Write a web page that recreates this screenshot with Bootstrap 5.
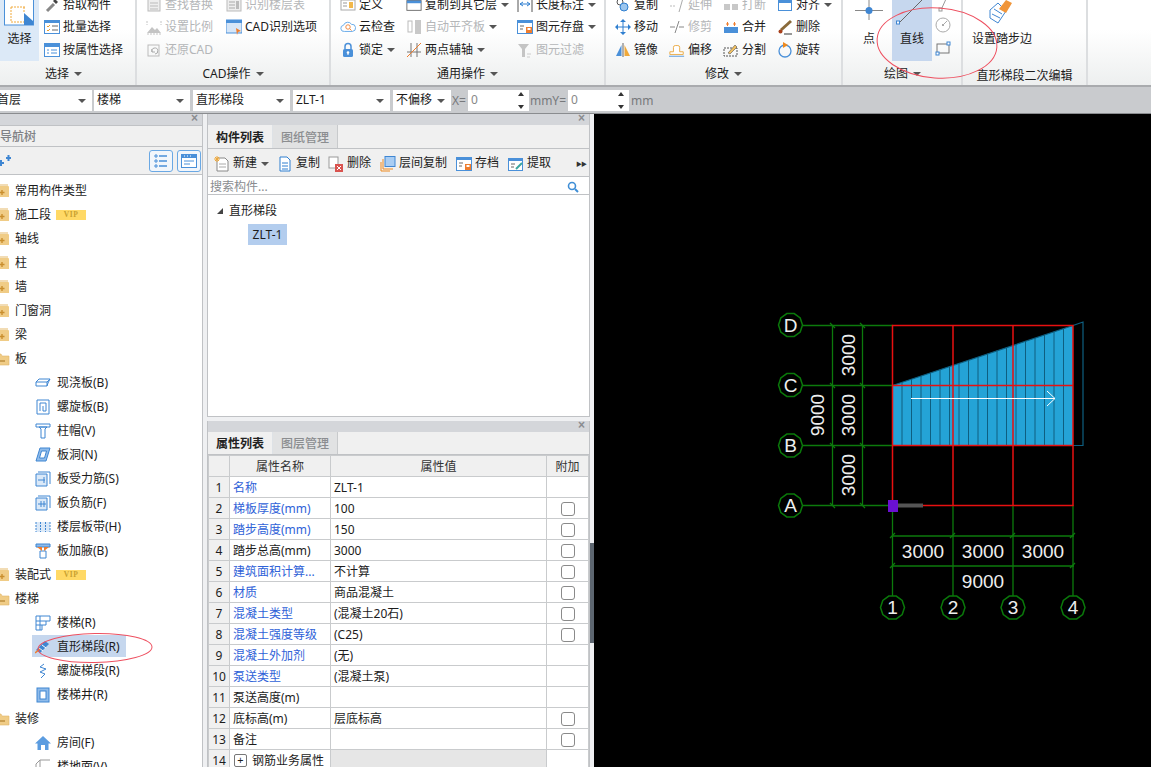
<!DOCTYPE html>
<html lang="zh-CN">
<head>
<meta charset="UTF-8">
<title>直形梯段</title>
<link rel="stylesheet" href="https://cdn.jsdelivr.net/npm/bootstrap@5.3.3/dist/css/bootstrap.min.css">
<style>
html,body{height:100%}
body{width:1151px;height:767px;overflow:hidden;position:relative;font:12px/1.2 "Noto Sans","Noto Sans CJK SC",sans-serif;color:#1c1c1c;background:#eff0f2}
.ico{width:16px;height:16px;flex:none;display:block}
/* ribbon */
.ribbon{height:87px;background:linear-gradient(#fff 35%,#edefef);border-bottom:2px solid #a9abae}
.rb-group{height:85px;flex:none;border-right:2px solid #dcdee0;display:flex;flex-direction:column}
.rb-body{height:64px;display:flex;overflow:hidden;flex:none}
.rb-col{margin-top:-6.5px;flex:none}
.rb-item{height:22.5px;display:flex;align-items:center;gap:3px;white-space:nowrap}
.rb-item .caret-dn{margin-left:1px}
.rb-off{color:#b4b6b8}
.rb-label{flex:1;text-align:center;padding-top:3px;white-space:nowrap}
.caret-dn{display:inline-block;border:4px solid transparent;border-top:4px solid #555;border-bottom:0;margin-left:5px;vertical-align:2px}
.rb-big{flex:none;height:61px;display:flex;flex-direction:column;align-items:center;justify-content:flex-end;padding-bottom:15px;position:relative;overflow:hidden}
.rb-big svg{position:absolute;left:0;top:0}
.rb-sel{background:#dce9f7}
.rb-active{background:#c6d7ee}
/* option bar */
.optbar{height:27px;background:#c9cbce;border-bottom:1px solid #8a8c8f;padding-top:3px;gap:2px;color:#77797c}
.opt-box{height:21px;background:#fff;color:#1c1c1c;display:flex;align-items:center;justify-content:space-between;padding:0 6px 0 3px;flex:none}
.opt-box i{border:4px solid transparent;border-top:4px solid #555;border-bottom:0}
.opt-num{color:#888;position:relative}
.opt-spin{position:absolute;right:5px;top:2px;bottom:2px;display:flex;flex-direction:column;justify-content:space-between}
.opt-spin i{display:block;border:3.5px solid transparent}
.opt-spin i:first-child{border-bottom:4px solid #333;border-top:0}
.opt-spin i:last-child{border-top:4px solid #333;border-bottom:0}
/* panes */
.workarea{height:653px}
.pane-strip{height:11px;background:#d4d6da;position:relative;flex:none}
.pane-strip b{position:absolute;right:4px;top:-3px;font:bold 12px/14px "Liberation Sans",sans-serif;color:#8a8c90}
.left-pane{width:203px;flex:none;background:#fff;border-right:1px solid #c0c2c5;overflow:hidden}
.lp-title{height:22px;flex:none;padding-top:3px;background:#f0f0f0;border-top:1px solid #c0c2c5;border-bottom:1px solid #c0c2c5;color:#7f8185;font-weight:500;display:flex;align-items:center}
.lp-tools{height:28px;flex:none;background:#f0f0f0;border-bottom:1px solid #c0c2c5;display:flex;align-items:center;gap:4px;padding-right:1px}
.lp-btn{width:24px;height:22px;border:1px solid #6aa8e4;border-radius:3px;background:#f2f6fb;display:flex;align-items:center;justify-content:center}
.nav-tree-list{padding-top:4px;flex:none}
.tree-row{height:24px;display:flex;align-items:center;white-space:nowrap}
.tree-row .fold{margin-left:-6px;margin-right:5px}
.tree-kid{padding-left:35px;position:relative}
.tree-kid span{margin-left:6px}
.tree-pick{background:#c6d7ee;position:absolute;left:32px;top:0;width:94px;height:22px;z-index:0}
.tree-kid svg,.tree-kid span{position:relative;z-index:1}
.tag-vip{width:30px;height:10px;background:#ffd966;color:#c8a030;font:bold 7.5px/10px "Liberation Serif",serif;text-align:center;margin-left:5px;letter-spacing:.5px}
.mid-col{width:383px;flex:none;margin:0 4px;gap:4px;min-height:0}
.mid-pane{background:#fff;border-left:1px solid #c0c2c5;border-right:1px solid #c0c2c5;overflow:hidden}
.mid-top{height:303px;flex:none;border-bottom:1px solid #c0c2c5}
.mid-bottom{flex:1;min-height:0}
.tabs-pane{background:#f0f0f0;border-bottom:1px solid #c0c2c5;flex:none;flex-wrap:nowrap}
.tabs-pane .nav-item{height:100%}
.tabs-pane .nav-link{width:65px;height:100%;padding:3px 0 0;border:0;border-radius:0;display:flex;align-items:center;justify-content:center;font-weight:500;margin:0;background:#e1e2e3;color:#8b8d90;border-right:1px solid #c8cacc}
.tabs-pane .nav-link.active{background:#f0f0f0;color:#222;font-weight:700}
.mid-tools{height:28px;background:#f0f0f0;border-bottom:1px solid #c0c2c5;display:flex;align-items:center;padding:2px 0 0 6px;flex:none;white-space:nowrap}
.mid-tools .tb-i{display:flex;align-items:center;gap:3px;margin-right:8px}
.mid-tools .tb-i:nth-child(n+3){margin-right:9px}
.mid-tools .tb-i .caret-dn{margin-left:1px}
.mid-more{margin-left:auto;margin-right:3px;font:6px "Liberation Sans",sans-serif;color:#333;letter-spacing:-1px}
.mid-search{height:18px;border-bottom:1px solid #c0c2c5;padding:3px 10px 0 2px;color:#8a8c8f;flex:none}
.comp-root{padding:3px 0 0 9px;height:29px;display:flex;align-items:center;gap:6px;flex:none}
.comp-tri{width:0;height:0;border:3px solid transparent;border-right-color:#444;border-bottom-color:#444}
.comp-pick{background:#b3cdee;margin-left:40px;width:39px;height:21px;padding-top:2px;display:flex;align-items:center;justify-content:center;flex:none}
/* property table */
.prop-tb{table-layout:fixed;width:380px;--bs-table-border-color:#c9cbcd;margin:0;color:#1c1c1c}
.prop-tb td,.prop-tb th{height:21px;padding:1px 3px 0;font-weight:400;vertical-align:middle;white-space:nowrap;overflow:hidden;line-height:19px}
.prop-tb th{background:#f0f0f0;text-align:center;color:#333}
.prop-tb .row-no{background:#f0f0f0;text-align:center;padding:1px 0 0}
.prop-tb .lnk{color:#2f62d8}
.prop-tb .fill{background:#e6e6e6}
.prop-tb .form-check-input{width:14px;height:14px;margin:1px auto 0;border:1px solid #8a8a8a;border-radius:3px;display:block}
.plus-box{display:inline-block;width:13px;height:13px;border:1px solid #777;border-radius:2px;line-height:10px;text-align:center;margin:0 5px 0 1px;vertical-align:1px;font-size:11px}
.splitter{width:4px;flex:none;position:relative;margin-left:-4px}
.split-grip{position:absolute;left:0;top:429px;width:4px;height:100px;background:#5d6670;z-index:2}
.canvas-wrap{flex:1;background:#000;overflow:hidden}
.canvas-wrap svg{display:block}
.cad-txt{fill:#eee;font:19px "Liberation Sans",sans-serif;text-anchor:middle}
.bub-txt{fill:#eee;font:19px "Liberation Sans",sans-serif;text-anchor:middle}
.note-ink{position:absolute;left:0;top:0;pointer-events:none;z-index:5}
</style>
</head>
<body>
<svg width="0" height="0" class="position-absolute">
<defs>
<symbol id="i-pick" viewBox="0 0 16 16"><path d="M3 14l7-7" stroke="#888" stroke-width="3"/><path d="M9 4l3 3 2-2-3-3z" fill="#444"/></symbol>
<symbol id="i-batch" viewBox="0 0 16 16"><rect x=".5" y="1.500" width="15" height="13" fill="#fff" stroke="#4a90d9"/><rect y="1" width="16" height="3" fill="#4a90d9"/><path d="M3 7l1 1 2-2M3 11l1 1 2-2" stroke="#e89b2c" fill="none"/><path d="M8 7h6M8 11h6" stroke="#666"/></symbol>
<symbol id="i-attr" viewBox="0 0 16 16"><rect x=".5" y="1.500" width="15" height="13" fill="#fff" stroke="#4a90d9"/><rect y="1" width="16" height="4" fill="#4a90d9"/><path d="M3 8h2M3 11h2M7 8h6M7 11h6" stroke="#4a90d9"/></symbol>
<symbol id="i-find" viewBox="0 0 16 16"><rect x="2" y="2" width="12" height="12" fill="#eee" stroke="#bbb"/><path d="M4 6h8M4 9h8M4 12h8" stroke="#bbb"/></symbol>
<symbol id="i-scale" viewBox="0 0 16 16"><path d="M1 14l5-6 3 3 2-2 4 5z" fill="#c4c4c4"/><path d="M1 2v4M15 2v4M1 15h14" stroke="#c4c4c4" stroke-dasharray="2 1"/></symbol>
<symbol id="i-undo" viewBox="0 0 16 16"><rect x="2" y="3" width="11" height="11" fill="none" stroke="#bbb"/><path d="M6 10a3 3 0 1 1 3 2M6 7v3h3" fill="none" stroke="#aaa"/></symbol>
<symbol id="i-floors" viewBox="0 0 16 16"><rect x="1" y="2" width="14" height="12" fill="#eee" stroke="#bbb"/><path d="M3 5h6M3 8h6M3 11h6" stroke="#aaa"/><rect x="10" y="4" width="3" height="8" fill="#bbb"/></symbol>
<symbol id="i-cad" viewBox="0 0 16 16"><rect y="1" width="16" height="13" fill="#d6e6f8" stroke="#4a90d9"/><rect y="1" width="16" height="3" fill="#4a90d9"/><path d="M10 9l5 3-3 1-1 3z" fill="#ef7d2e"/></symbol>
<symbol id="i-def" viewBox="0 0 16 16"><rect x="1" y="3" width="14" height="10" fill="#fff" stroke="#aaa"/><path d="M3 6h4M3 9h4" stroke="#999"/><rect x="9" y="5" width="4" height="6" fill="#f2b84b"/></symbol>
<symbol id="i-cloud" viewBox="0 0 18 16"><path d="M5 13a3.500 3.500 0 0 1-1-7 5 5 0 0 1 9-1 4 4 0 0 1 1 8z" fill="#fff" stroke="#5aa2e6"/><circle cx="9" cy="8" r="2.500" fill="none" stroke="#ef7d2e"/><path d="M11 10l2 2" stroke="#ef7d2e"/></symbol>
<symbol id="i-lock" viewBox="0 0 16 16"><path d="M5 7V4.500a3 3 0 0 1 6 0V7" fill="none" stroke="#4a90d9" stroke-width="1.500"/><rect x="3" y="7" width="10" height="8" rx="1.500" fill="#4a90d9"/><circle cx="8" cy="10.500" r="1.300" fill="#fff"/><path d="M8 11v2" stroke="#fff"/></symbol>
<symbol id="i-copyto" viewBox="0 0 18 16"><rect x="1" y="3" width="16" height="11" fill="#fff" stroke="#666"/><rect x="1" y="3" width="16" height="3" fill="#4a90d9"/></symbol>
<symbol id="i-align" viewBox="0 0 16 16"><rect x="2" y="2" width="4" height="11" fill="none" stroke="#bbb"/><rect x="9" y="1" width="6" height="14" fill="#c8c8c8"/></symbol>
<symbol id="i-axis" viewBox="0 0 16 16"><path d="M5 1v14M11 1v14M1 10h14" stroke="#777"/><path d="M1 15L15 1" stroke="#ef7d2e"/></symbol>
<symbol id="i-dim" viewBox="0 0 16 16"><path d="M1 1v14M15 1v14" stroke="#555"/><path d="M3 7h10M3 7l3-2M3 7l3 2M13 7l-3-2M13 7l-3 2" stroke="#2f7fd0" fill="none"/></symbol>
<symbol id="i-save" viewBox="0 0 16 16"><rect x=".5" y="1.500" width="15" height="13" fill="#fff" stroke="#4a90d9"/><rect y="1" width="16" height="3" fill="#4a90d9"/><path d="M3 7h4M3 10h3" stroke="#666"/><rect x="9" y="8" width="6" height="6" fill="#ef7d2e"/><rect x="10.500" y="9" width="3" height="2" fill="#fff"/></symbol>
<symbol id="i-filter" viewBox="0 0 16 16"><path d="M1 2h11L8 7v8H5V7z" fill="#c4c4c4"/><path d="M10 12h4M10 15h3" stroke="#ccc"/></symbol>
<symbol id="i-copy" viewBox="0 0 16 16"><circle cx="5" cy="5" r="3" fill="none" stroke="#555"/><circle cx="9" cy="10" r="4" fill="#9cc6ee" stroke="#2f7fd0"/></symbol>
<symbol id="i-extend" viewBox="0 0 16 16"><path d="M1 9h6" stroke="#bbb" stroke-dasharray="2 1"/><path d="M10 15L14 1" stroke="#aaa"/></symbol>
<symbol id="i-move" viewBox="0 0 16 16"><path d="M8 1v14M1 8h14" stroke="#2f7fd0"/><path d="M8 0l3 3H5zM8 16l3-3H5zM0 8l3 3V5zM16 8l-3 3V5z" fill="#2f7fd0"/></symbol>
<symbol id="i-trim" viewBox="0 0 16 16"><path d="M1 8h5M10 8h5" stroke="#888"/><path d="M6 14L10 2" stroke="#888"/></symbol>
<symbol id="i-break" viewBox="0 0 16 16"><rect x="1" y="7" width="6" height="6" fill="#c8c8c8"/><rect x="9" y="7" width="6" height="6" fill="#c8c8c8"/></symbol>
<symbol id="i-merge" viewBox="0 0 16 16"><rect x="1" y="8" width="14" height="6" fill="#4a90d9"/><path d="M3 5h3M4.500 3v4M10 5h3M11.500 3v4" stroke="#ef7d2e"/></symbol>
<symbol id="i-del" viewBox="0 0 16 16"><path d="M4 11L14 2" stroke="#8a6a3a" stroke-width="3"/><circle cx="3.500" cy="12.500" r="2" fill="#a8401c"/><path d="M7 15h8" stroke="#333"/></symbol>
<symbol id="i-mirror" viewBox="0 0 16 16"><path d="M8 1v14" stroke="#666"/><path d="M6.500 14H1l5.500-11z" fill="#4a90d9"/><path d="M9.500 14H15L9.500 3z" fill="#f0a93a"/></symbol>
<symbol id="i-offset" viewBox="0 0 18 16"><path d="M1 13V10h4V5a2 2 0 0 1 2-2h3a2 2 0 0 1 2 2v5h4v3z" fill="#fff" stroke="#e8a53a"/><path d="M0 15h17" stroke="#4a90d9"/></symbol>
<symbol id="i-split" viewBox="0 0 16 16"><rect x="1" y="6" width="13" height="8" fill="none" stroke="#555" stroke-dasharray="2 1"/><path d="M5 11l7-8 2 2-7 7z" fill="#f2c060" stroke="#555" stroke-width=".6"/></symbol>
<symbol id="i-alignr" viewBox="0 0 16 16"><rect x="1" y="1" width="14" height="13" fill="#4a90d9"/><rect x="2" y="6" width="12" height="7" fill="#fff"/></symbol>
<symbol id="i-rot" viewBox="0 0 16 16"><circle cx="8" cy="9" r="6" fill="none" stroke="#4a90d9" stroke-width="1.300"/><path d="M6 0l5 3-5 3z" fill="#ef8a1e"/></symbol>
<symbol id="i-fold" viewBox="0 0 16 16"><path d="M1 3h13a1 1 0 0 1 1 1v10H1z" fill="#f0cc86"/><path d="M2 2h12" stroke="#e4b96a"/><path d="M8 7v5M5.500 9.500h5" stroke="#c98e2e" stroke-width="1.400"/></symbol>
<symbol id="i-foldo" viewBox="0 0 16 16"><path d="M1 3h6l1 2h7v9H1z" fill="#f0cc86" stroke="#e0b668" stroke-width=".6"/><path d="M4 10h7" stroke="#b98a3a" stroke-width="1.400"/></symbol>
<symbol id="i-slab" viewBox="0 0 16 16"><path d="M1 7l3-3h11l-2 4-1 3H1z" fill="#fff" stroke="#3f86d2"/><path d="M1 7h11l3-3M12 7v4" fill="none" stroke="#3f86d2"/></symbol>
<symbol id="i-spiral" viewBox="0 0 16 16"><path d="M2 1h12v14H2z" fill="none" stroke="#3f86d2"/><path d="M5 12V4h6v8H8V7" fill="none" stroke="#3f86d2"/></symbol>
<symbol id="i-cap" viewBox="0 0 16 16"><path d="M1 1h14v3H1zM4 4h8l-2 2v9H6V6z" fill="#fff" stroke="#3f86d2"/></symbol>
<symbol id="i-hole" viewBox="0 0 16 16"><path d="M5 1h10l-4 13H1z" fill="#8fbbea" stroke="#3f86d2"/><path d="M6.500 4h5l-2 7h-5z" fill="#fff" stroke="#3f86d2"/></symbol>
<symbol id="i-rebar" viewBox="0 0 16 16"><path d="M1 3h11v12H1z" fill="#dbe9f8" stroke="#3f86d2"/><path d="M3 1h12v12" fill="none" stroke="#3f86d2"/><path d="M3 9h7M9 6v6" stroke="#3f86d2"/></symbol>
<symbol id="i-rebarf" viewBox="0 0 16 16"><path d="M1 3h11v12H1z" fill="#dbe9f8" stroke="#3f86d2"/><path d="M3 1h12v12" fill="none" stroke="#3f86d2"/><path d="M6 6v6M9 6v6M3 9h8" stroke="#3f86d2"/></symbol>
<symbol id="i-band" viewBox="0 0 16 16"><rect x="1" y="3" width="14" height="10" fill="#dbe9f8"/><path d="M1 3v10M15 3v10M5.500 3v10M10.500 3v10" stroke="#3f86d2" stroke-dasharray="2 1"/></symbol>
<symbol id="i-haunch" viewBox="0 0 16 16"><path d="M1 1h14v3H1z" fill="#8fbbea" stroke="#3f86d2"/><path d="M5 8h6v7H5z" fill="#fff" stroke="#3f86d2"/><path d="M2 4h5v4zM14 4H9v4z" fill="#ef7d2e"/></symbol>
<symbol id="i-stair" viewBox="0 0 16 16"><path d="M1 1h14v5h-4v4H7v5H1z" fill="#fff" stroke="#3f86d2"/><path d="M5 1v14M1 6h10M1 10h6" stroke="#3f86d2"/></symbol>
<symbol id="i-flight" viewBox="0 0 16 16"><path d="M1 11l9-9 4 3-9 9z" fill="#3f86d2"/><path d="M4 9l4 3M7 6l4 3" stroke="#fff"/><path d="M0 14l5-4" stroke="#ef7d2e" stroke-width="1.600"/></symbol>
<symbol id="i-helix" viewBox="0 0 16 16"><path d="M9 1L5 4l6 2-6 3 5 2-4 4" fill="none" stroke="#3f86d2"/></symbol>
<symbol id="i-well" viewBox="0 0 16 16"><rect x="2" y="1" width="12" height="14" fill="#8fbbea" stroke="#3f86d2"/><rect x="5" y="4" width="6" height="8" fill="#fff" stroke="#3f86d2"/></symbol>
<symbol id="i-room" viewBox="0 0 16 16"><path d="M8 1L0 8.500h2.500V15h11V8.500H16z" fill="#5b9ce0"/><rect x="6" y="10" width="4" height="5" fill="#fff"/></symbol>
<symbol id="i-floor" viewBox="0 0 16 16"><path d="M1 15V5l4-4h10M5 1v10" fill="none" stroke="#999"/></symbol>
<symbol id="i-plus" viewBox="0 0 16 16"><path d="M2 10h6M5 7v6M10 5h5M12.500 2v6" stroke="#3f86d2" stroke-width="2"/></symbol>
<symbol id="i-list" viewBox="0 0 16 16"><path d="M2 2h2v2H2zM2 7h2v2H2zM2 12h2v2H2z" fill="none" stroke="#4a90d9"/><path d="M6 3h8M6 8h8M6 13h8" stroke="#4a90d9" stroke-width="1.300"/></symbol>
<symbol id="i-form" viewBox="0 0 16 16"><rect x=".5" y="1.500" width="15" height="13" fill="#fff" stroke="#4a90d9"/><rect y="1" width="16" height="4" fill="#4a90d9"/><path d="M3 3h1M6 3h1M9 3h1" stroke="#fff"/><path d="M3 8h10M3 11h6" stroke="#4a90d9"/></symbol>
<symbol id="i-new" viewBox="0 0 16 16"><path d="M3 2h8l3 3v10H3z" fill="#fff" stroke="#888"/><path d="M5 8h7M5 11h7" stroke="#aaa"/><path d="M1 1l4 4M5 1L1 5M3 0v6M0 3h6" stroke="#f0a93a"/></symbol>
<symbol id="i-dup" viewBox="0 0 16 16"><path d="M3 1h7l3 3v11H3z" fill="#fff" stroke="#2f7fd0"/><path d="M5 7h6M5 10h6M5 13h6" stroke="#2f7fd0"/></symbol>
<symbol id="i-rm" viewBox="0 0 16 16"><rect x="1" y="1" width="9" height="11" fill="#fff" stroke="#999"/><rect x="7" y="8" width="8" height="8" fill="#d9534f"/><path d="M9 10l4 4M13 10l-4 4" stroke="#fff"/></symbol>
<symbol id="i-floorcopy" viewBox="0 0 16 16"><rect x="5" y="0.500" width="10" height="10" fill="#a9cdf3" stroke="#3f86d2"/><path d="M3 3v10h10M1 6v9h9" fill="none" stroke="#ef8a1e"/></symbol>
<symbol id="i-fetch" viewBox="0 0 16 16"><rect x=".5" y="2.500" width="14" height="12" fill="#fff" stroke="#4a90d9"/><rect y="2" width="15" height="3" fill="#4a90d9"/><path d="M3 8h4M3 11h3" stroke="#666"/><path d="M8 13l6-6" stroke="#3aa6a0" stroke-width="2"/></symbol>
<symbol id="i-mag" viewBox="0 0 12 12"><circle cx="5" cy="5" r="3.500" fill="none" stroke="#3f8ed6" stroke-width="1.600"/><path d="M8 8l3 3" stroke="#3f8ed6" stroke-width="2"/></symbol>
</defs>
</svg>

<!-- ribbon -->
<div class="ribbon d-flex">
  <div class="rb-group" style="width:137px">
    <div class="rb-body">
      <div class="rb-big rb-sel" style="width:39px">
        <svg width="39" height="30"><rect x="4.500" y="-4" width="29" height="29" fill="#fff" stroke="#4a90d9"/><path d="M11 7h15M11 7v15h14M24 7v6" fill="none" stroke="#f0a93a" stroke-dasharray="2 1"/><path d="M24 13l9 8v4h-9z" fill="#3f86d2"/></svg>
        <span>选择</span>
      </div>
      <div class="rb-col" style="margin-left:5px">
        <div class="rb-item"><svg class="ico"><use href="#i-pick"/></svg>拾取构件</div>
        <div class="rb-item"><svg class="ico"><use href="#i-batch"/></svg>批量选择</div>
        <div class="rb-item"><svg class="ico"><use href="#i-attr"/></svg>按属性选择</div>
      </div>
    </div>
    <div class="rb-label" style="padding-right:8px">选择<i class="caret-dn"></i></div>
  </div>
  <div class="rb-group" style="width:194px">
    <div class="rb-body">
      <div class="rb-col rb-off" style="margin-left:9px;width:80px">
        <div class="rb-item"><svg class="ico"><use href="#i-find"/></svg>查找替换</div>
        <div class="rb-item"><svg class="ico"><use href="#i-scale"/></svg>设置比例</div>
        <div class="rb-item"><svg class="ico"><use href="#i-undo"/></svg>还原CAD</div>
      </div>
      <div class="rb-col">
        <div class="rb-item rb-off"><svg class="ico"><use href="#i-floors"/></svg>识别楼层表</div>
        <div class="rb-item"><svg class="ico"><use href="#i-cad"/></svg>CAD识别选项</div>
      </div>
    </div>
    <div class="rb-label">CAD操作<i class="caret-dn"></i></div>
  </div>
  <div class="rb-group" style="width:275px">
    <div class="rb-body">
      <div class="rb-col" style="margin-left:9px;width:66px">
        <div class="rb-item"><svg class="ico"><use href="#i-def"/></svg>定义</div>
        <div class="rb-item"><svg class="ico"><use href="#i-cloud"/></svg>云检查</div>
        <div class="rb-item"><svg class="ico"><use href="#i-lock"/></svg>锁定<i class="caret-dn"></i></div>
      </div>
      <div class="rb-col" style="width:111px">
        <div class="rb-item"><svg class="ico"><use href="#i-copyto"/></svg>复制到其它层<i class="caret-dn"></i></div>
        <div class="rb-item rb-off"><svg class="ico"><use href="#i-align"/></svg>自动平齐板<i class="caret-dn"></i></div>
        <div class="rb-item"><svg class="ico"><use href="#i-axis"/></svg>两点辅轴<i class="caret-dn"></i></div>
      </div>
      <div class="rb-col">
        <div class="rb-item"><svg class="ico"><use href="#i-dim"/></svg>长度标注<i class="caret-dn"></i></div>
        <div class="rb-item"><svg class="ico"><use href="#i-save"/></svg>图元存盘<i class="caret-dn"></i></div>
        <div class="rb-item rb-off"><svg class="ico"><use href="#i-filter"/></svg>图元过滤</div>
      </div>
    </div>
    <div class="rb-label">通用操作<i class="caret-dn"></i></div>
  </div>
  <div class="rb-group" style="width:237px">
    <div class="rb-body">
      <div class="rb-col" style="margin-left:9px;width:54px">
        <div class="rb-item"><svg class="ico"><use href="#i-copy"/></svg>复制</div>
        <div class="rb-item"><svg class="ico"><use href="#i-move"/></svg>移动</div>
        <div class="rb-item"><svg class="ico"><use href="#i-mirror"/></svg>镜像</div>
      </div>
      <div class="rb-col" style="width:54px">
        <div class="rb-item rb-off"><svg class="ico"><use href="#i-extend"/></svg>延伸</div>
        <div class="rb-item rb-off"><svg class="ico"><use href="#i-trim"/></svg>修剪</div>
        <div class="rb-item"><svg class="ico"><use href="#i-offset"/></svg>偏移</div>
      </div>
      <div class="rb-col" style="width:54px">
        <div class="rb-item rb-off"><svg class="ico"><use href="#i-break"/></svg>打断</div>
        <div class="rb-item"><svg class="ico"><use href="#i-merge"/></svg>合并</div>
        <div class="rb-item"><svg class="ico"><use href="#i-split"/></svg>分割</div>
      </div>
      <div class="rb-col">
        <div class="rb-item"><svg class="ico"><use href="#i-alignr"/></svg>对齐<i class="caret-dn"></i></div>
        <div class="rb-item"><svg class="ico"><use href="#i-del"/></svg>删除</div>
        <div class="rb-item"><svg class="ico"><use href="#i-rot"/></svg>旋转</div>
      </div>
    </div>
    <div class="rb-label">修改<i class="caret-dn"></i></div>
  </div>
  <div class="rb-group" style="width:120px">
    <div class="rb-body">
      <div class="rb-big" style="width:34px;margin-left:9px">
        <svg width="34" height="30"><path d="M17 0v20M3 10.500h28" stroke="#888"/><circle cx="17" cy="10.500" r="3.500" fill="#3f86d2"/></svg>
        <span>点</span>
      </div>
      <div class="rb-big rb-active" style="width:40px;margin-left:6px">
        <svg width="40" height="30"><path d="M7 23L33 -3" stroke="#666"/><rect x="4.500" y="21" width="3" height="3" fill="#fff" stroke="#3f86d2"/></svg>
        <span>直线</span>
      </div>
      <div class="rb-col" style="margin-left:3px;margin-top:-7px">
        <svg class="d-block" width="16" height="22"><path d="M6 17L11 6" stroke="#999"/><rect x="4" y="15" width="3" height="3" fill="#fff" stroke="#999"/></svg>
        <svg class="d-block" style="margin-top:2px" width="16" height="18"><circle cx="8" cy="8" r="7" fill="none" stroke="#aaa"/><path d="M8 8l4-4" stroke="#aaa"/><rect x="7" y="7" width="2" height="2" fill="#aaa"/></svg>
        <svg class="d-block" style="margin-top:6px" width="16" height="16"><rect x="2" y="3" width="12" height="9" fill="none" stroke="#777"/><rect x="1" y="11" width="3" height="3" fill="#fff" stroke="#3f86d2"/><rect x="12" y="1" width="3" height="3" fill="#fff" stroke="#3f86d2"/></svg>
      </div>
    </div>
    <div class="rb-label text-start" style="padding-left:41px">绘图<i class="caret-dn"></i></div>
  </div>
  <div class="rb-group" style="width:125px">
    <div class="rb-body">
      <div class="rb-big" style="width:78px">
        <svg width="78" height="30"><path d="M27 10l8-7 8 8-8 12-8-5z" fill="#fff" stroke="#3f86d2"/><path d="M29 14l8 4M31 9l8 5" stroke="#3f86d2"/><path d="M36 9l7-9 6 3-6 10z" fill="#f0953a"/></svg>
        <span class="text-nowrap">设置踏步边</span>
      </div>
    </div>
    <div class="rb-label" style="padding-top:5px">直形梯段二次编辑</div>
  </div>
</div>

<!-- option bar -->
<div class="optbar d-flex">
  <div class="opt-box" style="width:98px;margin-left:-6px"><span>首层</span><i></i></div>
  <div class="opt-box" style="width:96px"><span>楼梯</span><i></i></div>
  <div class="opt-box" style="width:97px;margin-left:1px"><span>直形梯段</span><i></i></div>
  <div class="opt-box" style="width:97px;margin-left:1px"><span>ZLT-1</span><i></i></div>
  <div class="opt-box" style="width:58px;margin-left:1px"><span>不偏移</span><i></i></div>
  <span class="align-self-center" style="margin-left:-1px">X=</span>
  <div class="opt-box opt-num" style="width:61px"><span>0</span><div class="opt-spin"><i></i><i></i></div></div>
  <span class="align-self-center" style="margin-left:-1px">mmY=</span>
  <div class="opt-box opt-num" style="width:61px"><span>0</span><div class="opt-spin"><i></i><i></i></div></div>
  <span class="align-self-center">mm</span>
</div>

<div class="workarea d-flex">
  <!-- navigation tree -->
  <div class="left-pane d-flex flex-column">
    <div class="pane-strip"><b>×</b></div>
    <div class="lp-title">导航树</div>
    <div class="lp-tools">
      <svg class="ico me-auto" style="margin-left:-4px"><use href="#i-plus"/></svg>
      <div class="lp-btn"><svg class="ico"><use href="#i-list"/></svg></div>
      <div class="lp-btn"><svg class="ico"><use href="#i-form"/></svg></div>
    </div>
    <div id="navTree" class="nav-tree-list"></div>
  </div>

  <div class="mid-col d-flex flex-column">
    <div class="mid-pane mid-top d-flex flex-column">
      <div class="pane-strip"><b>×</b></div>
      <ul class="nav nav-tabs tabs-pane" style="height:24px">
        <li class="nav-item"><a class="nav-link active">构件列表</a></li>
        <li class="nav-item"><a class="nav-link">图纸管理</a></li>
      </ul>
      <div class="mid-tools">
        <div class="tb-i"><svg class="ico"><use href="#i-new"/></svg>新建<i class="caret-dn"></i></div>
        <div class="tb-i"><svg class="ico"><use href="#i-dup"/></svg>复制</div>
        <div class="tb-i"><svg class="ico"><use href="#i-rm"/></svg>删除</div>
        <div class="tb-i"><svg class="ico"><use href="#i-floorcopy"/></svg>层间复制</div>
        <div class="tb-i"><svg class="ico"><use href="#i-save"/></svg>存档</div>
        <div class="tb-i"><svg class="ico"><use href="#i-fetch"/></svg>提取</div>
        <span class="mid-more">▶▶</span>
      </div>
      <div class="mid-search d-flex align-items-center justify-content-between"><span>搜索构件...</span><svg width="12" height="12"><use href="#i-mag"/></svg></div>
      <div class="comp-root"><i class="comp-tri"></i><span>直形梯段</span></div>
      <div class="comp-pick">ZLT-1</div>
    </div>
    <div class="mid-pane mid-bottom d-flex flex-column">
      <div class="pane-strip"><b>×</b></div>
      <ul class="nav nav-tabs tabs-pane" style="height:23px">
        <li class="nav-item"><a class="nav-link active">属性列表</a></li>
        <li class="nav-item"><a class="nav-link">图层管理</a></li>
      </ul>
      <table class="table table-bordered prop-tb">
        <colgroup><col style="width:21px"><col style="width:101px"><col style="width:216px"><col style="width:42px"></colgroup>
        <thead><tr><th></th><th>属性名称</th><th>属性值</th><th>附加</th></tr></thead>
        <tbody id="propBody"></tbody>
      </table>
    </div>
  </div>

  <div class="splitter"><div class="split-grip"></div></div>
  <div class="canvas-wrap">
    <svg id="cad" width="557" height="653" viewBox="594 114 557 653" fill="none">
      <defs>
        <polygon id="bubble" points="12,0 9.700,7 3.700,11.400 -3.700,11.400 -9.700,7 -12,0 -9.700,-7 -3.700,-11.400 3.700,-11.400 9.700,-7" stroke="#0a780a" stroke-width="1.500" fill="#000"/>
      </defs>
      <!-- axes -->
      <g stroke="#0c7a0c" stroke-width="1.300">
        <path d="M803 325.500H893M803 385.500H893M803 445.500H893M803 505.500H893"/>
        <path d="M892.500 505V596M953 505V596M1013 505V596M1073 505V596"/>
        <path d="M832.500 325V506M862.500 325V506"/>
        <path d="M892 536H1074M892 566H1074"/>
        <path d="M830 323l5 5M830 383l5 5M830 443l5 5M830 503l5 5M860 323l5 5M860 383l5 5M860 443l5 5M860 503l5 5"/>
        <path d="M890 538l5-5M950 538l5-5M1010 538l5-5M1070 538l5-5M890 568l5-5M1070 568l5-5"/>
      </g>
      <!-- stair flight -->
      <polygon points="892.500,385.500 1073,325.500 1073,445.500 892.500,445.500" fill="#24a3d6"/>
      <path id="treads" stroke="#0e5f80" stroke-width="1"/>
      <path d="M892.500 385.500L1073 325.500L1083 322V445.500H1073" stroke="#0e5f80" stroke-width="1.200"/>
      <!-- red grid -->
      <g stroke="#e81010" stroke-width="1.500">
        <rect x="892.500" y="325.500" width="180.500" height="180"/>
        <path d="M953 325.500V505.500M1013 325.500V505.500M892.500 385.500H1073M892.500 445.500H1073"/>
      </g>
      <path d="M911 398.500H1055M1047 391l8 7.500-8 7.500" stroke="#fff" stroke-width="1"/>
      <path d="M897 505.500H923" stroke="#555" stroke-width="4"/>
      <rect x="888" y="500" width="10" height="12" fill="#6a10d2"/>
      <!-- bubbles -->
      <use href="#bubble" x="790.500" y="325"/><use href="#bubble" x="790.500" y="385"/><use href="#bubble" x="790.500" y="445.500"/><use href="#bubble" x="790.500" y="505.500"/>
      <use href="#bubble" x="892.500" y="607.500"/><use href="#bubble" x="953" y="607.500"/><use href="#bubble" x="1013" y="607.500"/><use href="#bubble" x="1073" y="607.500"/>
      <text class="bub-txt" x="790.500" y="332">D</text><text class="bub-txt" x="790.500" y="392">C</text><text class="bub-txt" x="790.500" y="452">B</text><text class="bub-txt" x="790.500" y="512">A</text>
      <text class="bub-txt" x="892.500" y="614">1</text><text class="bub-txt" x="953" y="614">2</text><text class="bub-txt" x="1013" y="614">3</text><text class="bub-txt" x="1073" y="614">4</text>
      <!-- dimensions -->
      <text class="cad-txt" transform="translate(855 355) rotate(-90)">3000</text>
      <text class="cad-txt" transform="translate(855 415) rotate(-90)">3000</text>
      <text class="cad-txt" transform="translate(855 475) rotate(-90)">3000</text>
      <text class="cad-txt" transform="translate(824 415) rotate(-90)">9000</text>
      <text class="cad-txt" x="923" y="558">3000</text><text class="cad-txt" x="983" y="558">3000</text><text class="cad-txt" x="1043" y="558">3000</text>
      <text class="cad-txt" x="983" y="588">9000</text>
    </svg>
  </div>
</div>

<!-- hand drawn red marks on the screenshot -->
<svg class="note-ink" width="1151" height="767" fill="none" stroke="#ee5060" stroke-width="1">
  <ellipse cx="937" cy="43" rx="60" ry="35" transform="rotate(4 937 43)"/>
  <ellipse cx="95" cy="648" rx="57" ry="14.500" transform="rotate(-1 95 648)"/>
</svg>

<script>
const treeData = [
  ['f','常用构件类型'],['f','施工段',1],['f','轴线'],['f','柱'],['f','墙'],['f','门窗洞'],['f','梁'],['o','板'],
  ['k','现浇板(B)','slab'],['k','螺旋板(B)','spiral'],['k','柱帽(V)','cap'],['k','板洞(N)','hole'],
  ['k','板受力筋(S)','rebar'],['k','板负筋(F)','rebarf'],['k','楼层板带(H)','band'],['k','板加腋(B)','haunch'],
  ['f','装配式',1],['o','楼梯'],
  ['k','楼梯(R)','stair'],['k','直形梯段(R)','flight',1],['k','螺旋梯段(R)','helix'],['k','楼梯井(R)','well'],
  ['o','装修'],['k','房间(F)','room'],['k','楼地面(V)','floor']
];
document.getElementById('navTree').innerHTML = treeData.map(t => {
  if (t[0] === 'k') {
    return `<div class="tree-row tree-kid">${t[3] ? '<div class="tree-pick"></div>' : ''}<svg class="ico"><use href="#i-${t[2]}"/></svg><span>${t[1]}</span></div>`;
  }
  const icon = t[0] === 'f' ? 'i-fold' : 'i-foldo';
  return `<div class="tree-row"><svg class="ico fold"><use href="#${icon}"/></svg>${t[1]}${t[2] ? '<div class="tag-vip">VIP</div>' : ''}</div>`;
}).join('');

const props = [
  ['名称','ZLT-1',1,0],['梯板厚度(mm)','100',1,1],['踏步高度(mm)','150',1,1],['踏步总高(mm)','3000',0,1],
  ['建筑面积计算...','不计算',1,1],['材质','商品混凝土',1,1],['混凝土类型','(混凝土20石)',1,1],['混凝土强度等级','(C25)',1,1],
  ['混凝土外加剂','(无)',1,0],['泵送类型','(混凝土泵)',1,0],['泵送高度(m)','',0,0],['底标高(m)','层底标高',0,1],['备注','',0,1]
];
let rows = props.map((p,i) => `<tr><td class="row-no">${i+1}</td><td class="${p[2] ? 'lnk' : ''}">${p[0]}</td><td>${p[1]}</td><td>${p[3] ? '<input class="form-check-input" type="checkbox">' : ''}</td></tr>`).join('');
rows += '<tr><td class="row-no">14</td><td><span class="plus-box">+</span>钢筋业务属性</td><td class="fill"></td><td></td></tr>';
document.getElementById('propBody').innerHTML = rows;

// stair treads, evenly spaced up to the sloped edge
let d = '';
for (let i = 1; i < 19; i++) {
  const x = 892.5 + i * 9.5;
  d += `M${x} 445.5V${385.5 - (x - 892.5) / 3}`;
}
document.getElementById('treads').setAttribute('d', d);
</script>
<script src="https://cdn.jsdelivr.net/npm/bootstrap@5.3.3/dist/js/bootstrap.bundle.min.js"></script>
</body>
</html>
